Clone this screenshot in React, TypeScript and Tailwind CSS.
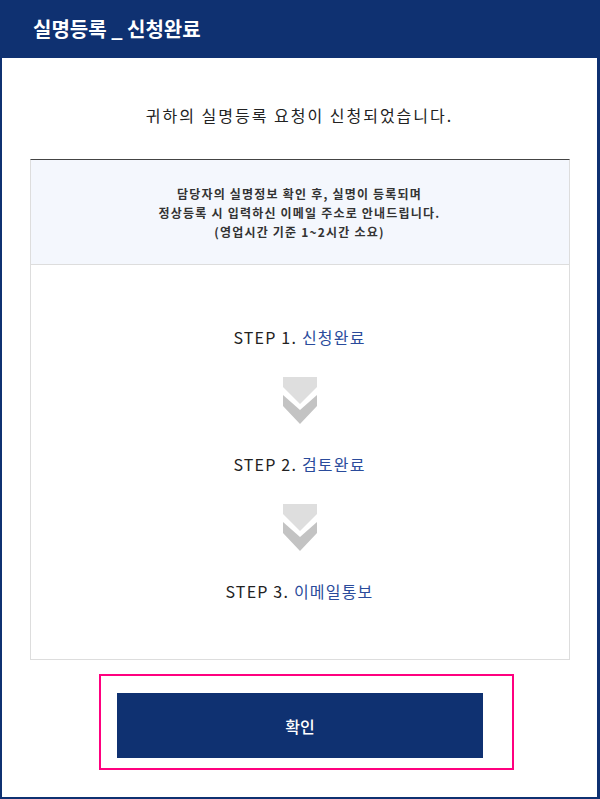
import React from 'react';

const font = { fontFamily: '"Noto Sans CJK KR", "Noto Sans", sans-serif' };

const steps = [
  { no: 'STEP 1.', label: '신청완료' },
  { no: 'STEP 2.', label: '검토완료' },
  { no: 'STEP 3.', label: '이메일통보' },
];

const Chevron: React.FC = () => (
  <svg width="34" height="47" viewBox="0 0 34 47" className="block mx-auto">
    <polygon points="0,0 34,0 34,10 17,27 0,10" fill="#dedede" />
    <polygon points="0,18 17,33 34,18 34,29 17,47 0,29" fill="#c3c3c3" />
  </svg>
);

const App: React.FC = () => {
  return (
    <div className="w-[600px] h-[799px] bg-white flex flex-col" style={font}>
      <header className="h-[58px] shrink-0 bg-[#0f3171] flex items-center pl-[33px]">
        <h1 className="text-white text-[20px] font-bold leading-none">실명등록 _ 신청완료</h1>
      </header>

      <div className="flex-1 flex flex-col border-l-2 border-r-[3px] border-b-2 border-[#0f3171]">
        <p className="pt-[45px] text-center text-[16px] leading-[24px] tracking-[2px] text-[#222]">
          귀하의 실명등록 요청이 신청되었습니다.
        </p>

        <div className="mt-[32px] w-[540px] mx-auto border-t border-t-[#444] border-x border-x-[#ddd] border-b border-b-[#ddd]">
          <div className="h-[105px] bg-[#f4f7fd] border-b border-[#ddd] flex flex-col items-center justify-center text-[12px] leading-[19px] tracking-[1.2px] font-bold text-[#333]">
            <span>담당자의 실명정보 확인 후, 실명이 등록되며</span>
            <span>정상등록 시 입력하신 이메일 주소로 안내드립니다.</span>
            <span>(영업시간 기준 1~2시간 소요)</span>
          </div>

          <div className="pt-[60px] pb-[56px] flex flex-col items-center">
            {steps.map((s, i) => (
              <React.Fragment key={s.no}>
                <p className="text-[16px] leading-[24px] tracking-[1.2px] text-[#222]">
                  {s.no} <span className="text-[#2a4b9b]">{s.label}</span>
                </p>
                {i < steps.length - 1 && (
                  <div className="my-[28px]">
                    <Chevron />
                  </div>
                )}
              </React.Fragment>
            ))}
          </div>
        </div>

        <div className="mt-[14px] ml-[97px]">
          <div className="w-[415px] h-[96px] border-2 border-[#ff007f] pl-[16px] pt-[17px]">
            <button className="w-[366px] h-[65px] bg-[#0f3171] text-white text-[16px] font-medium">
              확인
            </button>
          </div>
        </div>
      </div>
    </div>
  );
};

export default App;
